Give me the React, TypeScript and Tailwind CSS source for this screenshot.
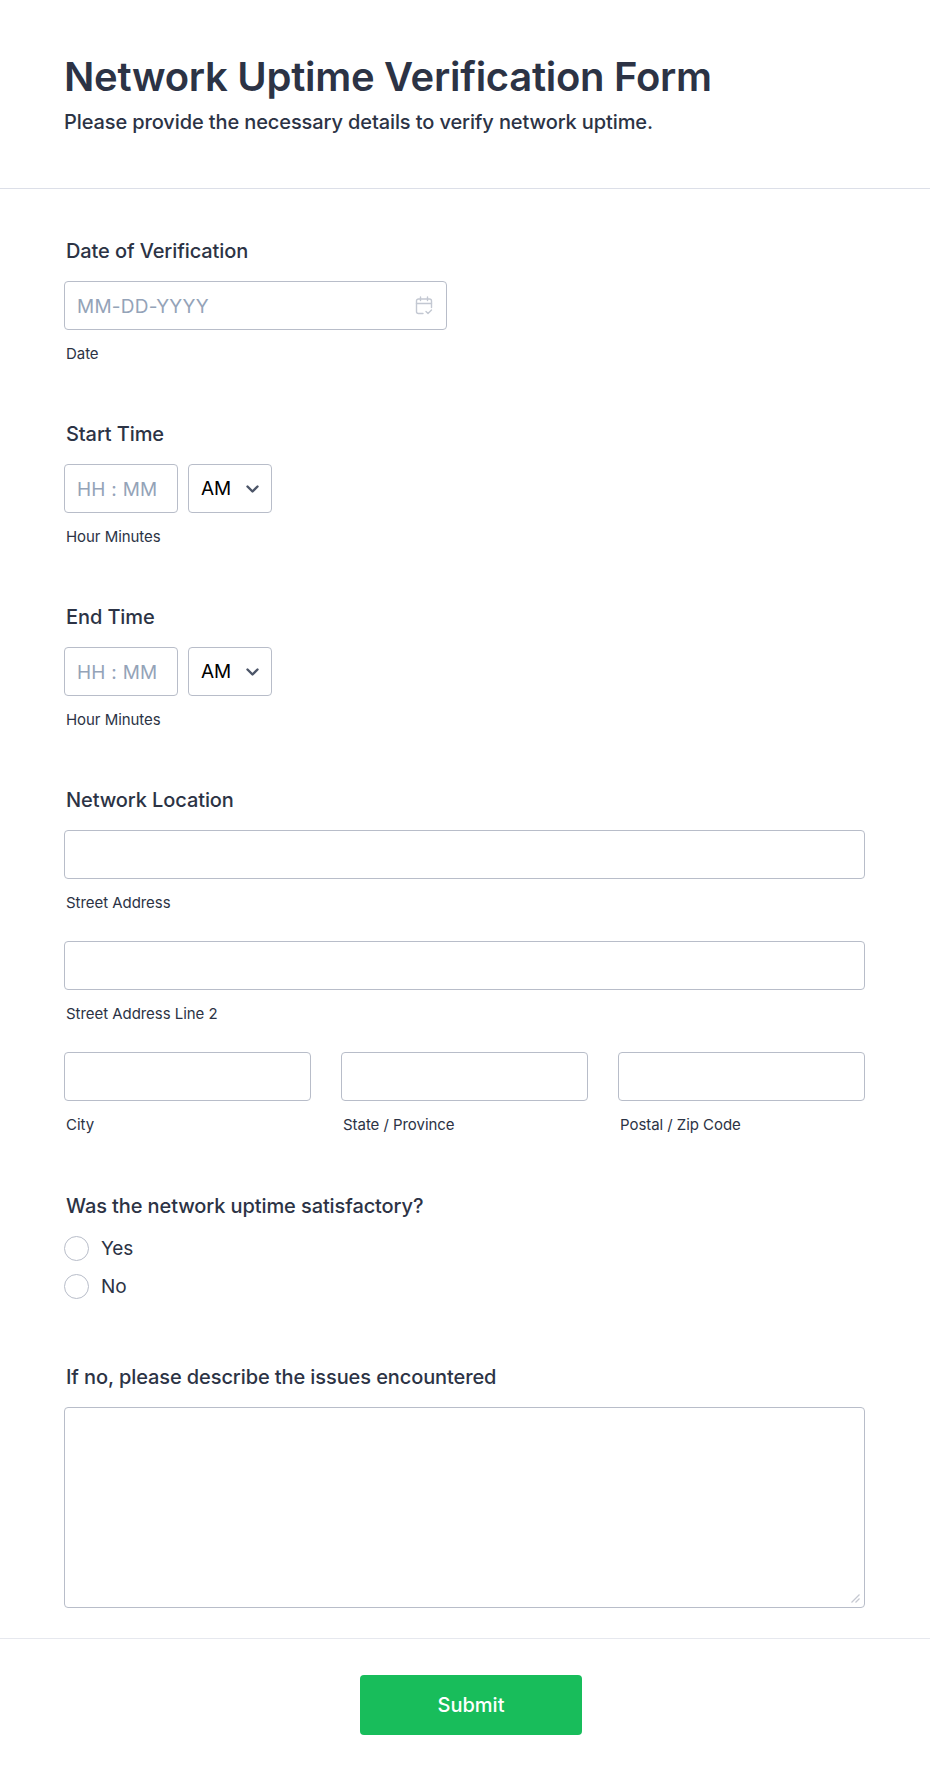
const font = { fontFamily: 'Inter, "Liberation Sans", sans-serif' }

const inputCls =
  'h-[49px] w-full rounded-[4px] border border-[#b8bdc9] bg-white px-[12px] pt-[2px] text-[19px] tracking-[0.25px] text-[#2c3345] outline-none placeholder:text-[#94a3b8]'

function Label({ children }: { children: React.ReactNode }) {
  return <div className="mb-[19px] pl-[2px] text-[20px] leading-[22px] font-medium tracking-[-0.1px] text-[#2c3345]">{children}</div>
}

function Sub({ children }: { children: React.ReactNode }) {
  return <div className="mt-[14px] pl-[2px] text-[15px] leading-[20px] tracking-[-0.05px] text-[#2c3345]">{children}</div>
}

function CalendarIcon() {
  return (
    <svg className="absolute top-[15px] right-[13px]" width="20" height="20" viewBox="0 0 20 20" fill="none" stroke="#c3c8d2" strokeWidth="1.4" strokeLinecap="round" strokeLinejoin="round">
      <path d="M9 17.5H4.5a2 2 0 0 1-2-2V5a2 2 0 0 1 2-2h11a2 2 0 0 1 2 2v6.5" />
      <path d="M2.5 7.5h15M6.5 1v3.5M13.5 1v3.5" />
      <path d="M12 15.5l2 2 3.5-3.5" />
    </svg>
  )
}

function TimeField({ label }: { label: string }) {
  return (
    <div className="mb-[59px]">
      <Label>{label}</Label>
      <div className="flex gap-[10px]">
        <input className={inputCls + ' !w-[114px]'} placeholder="HH : MM" aria-label={label} />
        <div className="relative w-[84px]">
          <select className="h-[49px] w-full appearance-none rounded-[4px] border border-[#b8bdc9] bg-white pt-[2px] pl-[12px] text-[19px] text-black outline-none" aria-label="AM or PM">
            <option>AM</option>
            <option>PM</option>
          </select>
          <svg className="pointer-events-none absolute top-[21px] right-[13px]" width="13" height="9" viewBox="0 0 13 9" fill="none" stroke="#4c5568" strokeWidth="2.4" strokeLinecap="round" strokeLinejoin="round">
            <path d="M1.5 1.5L6.5 6.5l5-5" />
          </svg>
        </div>
      </div>
      <Sub>Hour Minutes</Sub>
    </div>
  )
}

function Radio({ label }: { label: string }) {
  return (
    <label className="flex h-[25px] items-center gap-[12px] text-[19px] tracking-[-0.1px] text-[#2c3345]">
      <input type="radio" name="satisfactory" className="size-[25px] shrink-0 appearance-none rounded-full border border-[#b8bdc9] bg-white" />
      <span className="pt-[2px]">{label}</span>
    </label>
  )
}

export default function App() {
  return (
    <div className="min-h-[1785px] bg-white" style={font}>
      <header className="h-[189px] border-b border-[#dcdfe8] px-[64px] pt-[53px]">
        <h1 className="text-[40px] leading-[48px] font-semibold tracking-[-0.28px] text-[#2c3345]">Network Uptime Verification Form</h1>
        <p className="mt-[8px] text-[20px] leading-[26px] font-medium tracking-[-0.11px] text-[#2c3345]">Please provide the necessary details to verify network uptime.</p>
      </header>

      <form className="pt-[51px] pr-[65px] pl-[64px]">
        <div className="mb-[59px]">
          <Label>Date of Verification</Label>
          <div className="relative w-[383px]">
            <input className={inputCls} placeholder="MM-DD-YYYY" aria-label="Date" />
            <CalendarIcon />
          </div>
          <Sub>Date</Sub>
        </div>

        <TimeField label="Start Time" />
        <TimeField label="End Time" />

        <div className="mb-[60px]">
          <Label>Network Location</Label>
          <input className={inputCls} aria-label="Street Address" />
          <Sub>Street Address</Sub>
          <div className="mt-[28px]">
            <input className={inputCls} aria-label="Street Address Line 2" />
            <Sub>Street Address Line 2</Sub>
          </div>
          <div className="mt-[28px] grid grid-cols-3 gap-[30px]">
            <div>
              <input className={inputCls} aria-label="City" />
              <Sub>City</Sub>
            </div>
            <div>
              <input className={inputCls} aria-label="State / Province" />
              <Sub>State / Province</Sub>
            </div>
            <div>
              <input className={inputCls} aria-label="Postal / Zip Code" />
              <Sub>Postal / Zip Code</Sub>
            </div>
          </div>
        </div>

        <div className="mb-[67px]">
          <Label>Was the network uptime satisfactory?</Label>
          <div className="flex flex-col gap-[13px]">
            <Radio label="Yes" />
            <Radio label="No" />
          </div>
        </div>

        <div>
          <Label>If no, please describe the issues encountered</Label>
          <div className="relative">
            <textarea className="block h-[201px] w-full resize-none rounded-[4px] border border-[#b8bdc9] bg-white p-[13px] text-[19px] outline-none" aria-label="Issues encountered" />
            <svg className="pointer-events-none absolute right-[5px] bottom-[5px]" width="9" height="9" viewBox="0 0 9 9" fill="none" stroke="#c5c8d0" strokeWidth="1.2">
              <path d="M0.5 8.5L8.5 0.5M4.5 8.5L8.5 4.5" />
            </svg>
          </div>
        </div>
      </form>

      <footer className="mt-[30px] flex justify-center border-t border-[#e6e8ee] pt-[36px]">
        <button type="button" className="ml-[12px] h-[60px] w-[222px] rounded-[4px] bg-[#18bd5b] text-[20px] font-medium text-white">Submit</button>
      </footer>
    </div>
  )
}
